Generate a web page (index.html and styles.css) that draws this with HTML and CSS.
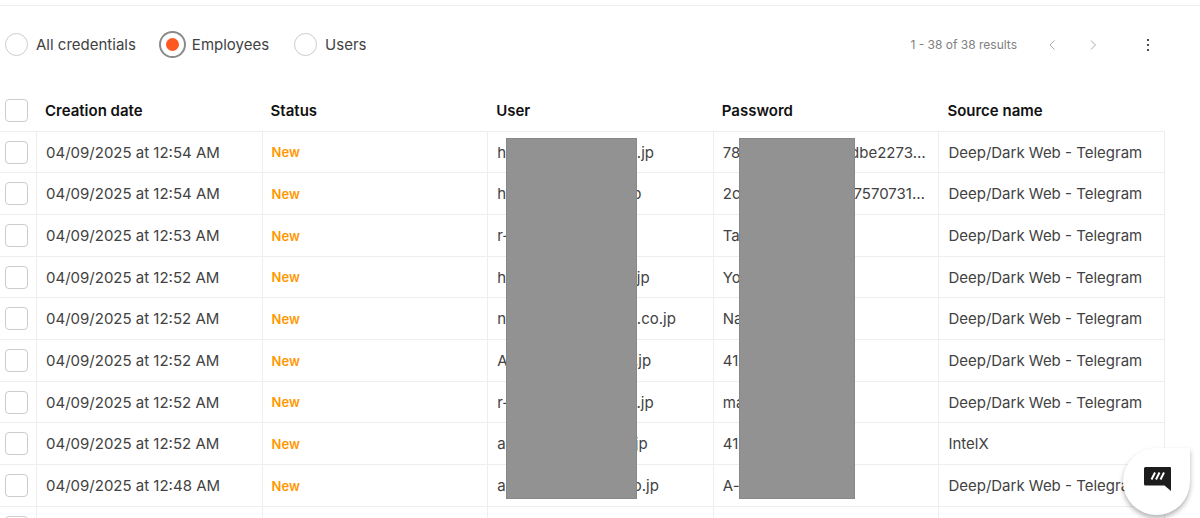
FILE: index.html
```
<!DOCTYPE html>
<html lang="en">
<head>
  <meta charset="UTF-8" />
  <meta name="viewport" content="width=device-width, initial-scale=1.0"/>
  <title>Credentials</title>
  <link rel="stylesheet" href="styles.css">
</head>

<body>

  <div class="page">
    <!-- Toolbar -->
    <div class="toolbar">
      <div class="filters">
        <label><input type="radio" name="scope" />All credentials</label>
        <label><input type="radio" name="scope" checked />Employees</label>
        <label><input type="radio" name="scope" />Users</label>
      </div>
      <div class="paging">
        <span>1 - 38 of 38 results</span>
        <button class="prev" aria-label="Previous page">
          <svg width="8" height="12" viewBox="0 0 8 12"><path d="M6.500 1.500 2 6 6.500 10.500" /></svg>
        </button>
        <button class="next" aria-label="Next page">
          <svg width="8" height="12" viewBox="0 0 8 12"><path d="M2 1.500 6.500 6 2 10.500" /></svg>
        </button>
        <button class="more" aria-label="More actions">
          <svg width="4" height="14" viewBox="0 0 4 14"><circle cx="2" cy="2" r="1.100" /><circle cx="2" cy="7" r="1.100" /><circle cx="2" cy="12" r="1.100" /></svg>
        </button>
      </div>
    </div>

    <!-- Credentials -->
    <div class="results">
      <table>
        <thead>
          <tr>
            <th class="pick"><input type="checkbox" aria-label="Select all" /></th>
            <th>Creation date</th>
            <th>Status</th>
            <th>User</th>
            <th>Password</th>
            <th>Source name</th>
          </tr>
        </thead>
        <tbody>
          <tr>
            <td class="pick"><input type="checkbox" aria-label="Select row" /></td>
            <td>04/09/2025 at 12:54 AM</td>
            <td class="status">New</td>
            <td>hxxxxxxxxxxxxxxx.l.jp</td>
            <td>78xxxxxxxxxxxxlxdbe2273…</td>
            <td>Deep/Dark Web - Telegram</td>
          </tr>
          <tr>
            <td class="pick"><input type="checkbox" aria-label="Select row" /></td>
            <td>04/09/2025 at 12:54 AM</td>
            <td class="status">New</td>
            <td>hxxxxxxxxxxxxxxl.jp</td>
            <td>2cxxxxxxxxxxxoof7570731…</td>
            <td>Deep/Dark Web - Telegram</td>
          </tr>
          <tr>
            <td class="pick"><input type="checkbox" aria-label="Select row" /></td>
            <td>04/09/2025 at 12:53 AM</td>
            <td class="status">New</td>
            <td>r-xxxxxxxxxx.jp</td>
            <td>Taxxxxxx</td>
            <td>Deep/Dark Web - Telegram</td>
          </tr>
          <tr>
            <td class="pick"><input type="checkbox" aria-label="Select row" /></td>
            <td>04/09/2025 at 12:52 AM</td>
            <td class="status">New</td>
            <td>hxxxxxxxxxxxxxxxl.jp</td>
            <td>Yoxxxxxx</td>
            <td>Deep/Dark Web - Telegram</td>
          </tr>
          <tr>
            <td class="pick"><input type="checkbox" aria-label="Select row" /></td>
            <td>04/09/2025 at 12:52 AM</td>
            <td class="status">New</td>
            <td>nxxxxxxxxxxxxxxx.l.co.jp</td>
            <td>Naxxxxxx</td>
            <td>Deep/Dark Web - Telegram</td>
          </tr>
          <tr>
            <td class="pick"><input type="checkbox" aria-label="Select row" /></td>
            <td>04/09/2025 at 12:52 AM</td>
            <td class="status">New</td>
            <td>Axxxxxxxxxxxxxxxl.jp</td>
            <td>41xxxxxx</td>
            <td>Deep/Dark Web - Telegram</td>
          </tr>
          <tr>
            <td class="pick"><input type="checkbox" aria-label="Select row" /></td>
            <td>04/09/2025 at 12:52 AM</td>
            <td class="status">New</td>
            <td>r-xxxxxxxxxxxxxxo..jp</td>
            <td>maxxxxxx</td>
            <td>Deep/Dark Web - Telegram</td>
          </tr>
          <tr>
            <td class="pick"><input type="checkbox" aria-label="Select row" /></td>
            <td>04/09/2025 at 12:52 AM</td>
            <td class="status">New</td>
            <td>axxxxxxxxxxxxooo.jp</td>
            <td>41xxxxxx</td>
            <td>IntelX</td>
          </tr>
          <tr>
            <td class="pick"><input type="checkbox" aria-label="Select row" /></td>
            <td>04/09/2025 at 12:48 AM</td>
            <td class="status">New</td>
            <td>axxxxxxxxxxxxxxx.o.jp</td>
            <td>A-xxxxxx</td>
            <td>Deep/Dark Web - Telegram</td>
          </tr>
          <tr>
            <td class="pick"><input type="checkbox" aria-label="Select row" /></td>
            <td></td>
            <td></td>
            <td></td>
            <td></td>
            <td></td>
          </tr>
        </tbody>
      </table>
      <!-- Redaction over the sensitive columns -->
      <div class="mask mask-user"></div>
      <div class="mask mask-password"></div>
    </div>
  </div>

  <!-- Chat launcher -->
  <button class="chat" aria-label="Open chat">
    <svg width="28" height="26" viewBox="0 0 28 26">
      <path d="M2.500 1H27a1 1 0 0 1 1 1V25L21.500 19.500H2.500a1.500 1.500 0 0 1-1.500-1.500V2.500A1.500 1.500 0 0 1 2.500 1Z" fill="#1c1c1c" />
      <path d="M8.500 13.500 12 6.500M13 13.500 16.500 6.500M17.500 13.500 21 6.500" stroke="#fff" stroke-width="2" />
    </svg>
  </button>

</body>
</html>
```
FILE: styles.css
```
* {
  box-sizing: border-box;
}
body {
  font-family: Inter, Arial, sans-serif;
  font-size: 15px;
  margin: 0;
  background-color: #fff;
  color: #424242;
}
.page {
  height: 100vh;
  overflow: hidden;
  padding-top: 5px;
}
button {
  border: none;
  background: none;
  padding: 0;
  cursor: pointer;
}
input {
  appearance: none;
  flex: none;
  margin: 0;
  width: 23px;
  height: 23px;
  border: 1px solid #ccc;
  background: #fff;
}
input[type="radio"] {
  border-radius: 50%;
}
input[type="radio"]:checked {
  border: 5px solid #fff;
  background: #ff5722;
  box-shadow: 0 0 0 2px #8a8a8a;
}
input[type="checkbox"] {
  display: block;
  border-radius: 4px;
}
.toolbar {
  display: flex;
  justify-content: space-between;
  align-items: center;
  height: 85px;
  padding: 0 50px 7px 5px;
  border-top: 1px solid #eee;
}
.filters {
  display: flex;
  gap: 25px;
}
.filters label {
  display: flex;
  align-items: center;
  gap: 8px;
}
.paging {
  display: flex;
  align-items: center;
  font-size: 12px;
  color: #808080;
}
.paging svg {
  display: block;
}
.paging path {
  fill: none;
  stroke: #aaa;
}
.paging circle {
  fill: #222;
}
.prev {
  margin-left: 31px;
}
.next {
  margin-left: 33px;
}
.more {
  margin-left: 49px;
}
.results {
  position: relative;
  margin-right: 35px;
}
table {
  width: 100%;
  table-layout: fixed;
  border-collapse: separate;
  border-spacing: 0;
}
th {
  height: 42px;
  padding: 0 8px;
  text-align: left;
  font-weight: 600;
  color: #111;
  border-bottom: 1px solid #eee;
}
td {
  height: 42px;
  padding: 0 9px;
  white-space: nowrap;
  overflow: hidden;
  text-overflow: ellipsis;
  border-right: 1px solid #eee;
  border-bottom: 1px solid #eee;
}
tr:nth-child(3n + 1) td {
  height: 41px;
}
.pick {
  width: 37px;
  padding: 0 5px;
}
.status {
  font-size: 13px;
  font-weight: 600;
  color: #ff9800;
}
.mask {
  position: absolute;
  top: 48px;
  height: 361px;
  background: #929292;
  border: 1px solid #888;
}
.mask-user {
  left: 506px;
  width: 131px;
}
.mask-password {
  left: 739px;
  width: 116px;
}
.chat {
  position: fixed;
  right: 10px;
  bottom: 3px;
  width: 67px;
  height: 67px;
  display: flex;
  align-items: center;
  justify-content: center;
  padding-bottom: 5px;
  background: #fff;
  border-radius: 50% 0 50% 50%;
  box-shadow: 0 3px 5px rgba(0, 0, 0, 0.3);
}
```
